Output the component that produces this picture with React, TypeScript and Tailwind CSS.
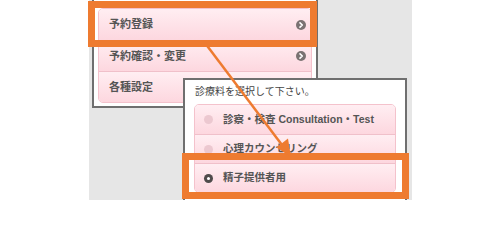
const font = { fontFamily: '"Liberation Sans", "Noto Sans CJK JP", sans-serif' };

const Chevron = () => (
  <svg width="10" height="10" viewBox="0 0 10 10">
    <circle cx="5" cy="5" r="5" fill="#7a7272" />
    <path d="M4 2.8 L6.3 5 L4 7.2" fill="none" stroke="#fff" strokeWidth="1.6" strokeLinecap="round" strokeLinejoin="round" />
  </svg>
);

const Radio = ({ on }: { on?: boolean }) =>
  on ? (
    <span className="w-[9px] h-[9px] rounded-full bg-[#4f4b4b] flex items-center justify-center">
      <span className="w-[3px] h-[3px] rounded-full bg-white" />
    </span>
  ) : (
    <span className="w-[9px] h-[9px] rounded-full bg-[#ecc8d0]" />
  );

const menu = [
  { label: "予約登録", arrow: true },
  { label: "予約確認・変更", arrow: true },
  { label: "各種設定", arrow: false },
];

const options = [
  { label: "診察・検査 Consultation・Test", on: false },
  { label: "心理カウンセリング", on: false },
  { label: "精子提供者用", on: true },
];

const App = () => {
  return (
    <div className="w-[500px] h-[200px] bg-white overflow-hidden relative" style={font}>
      <div className="ml-[89px] w-[323px] h-[200px] bg-[#e6e6e6] relative flex flex-col">
        {/* menu panel */}
        <div className="ml-[3px] mt-[-4px] w-[226px] h-[112px] shrink-0 border-2 border-[#6f6f6f] bg-white pt-[10px] pl-[4px] pr-[4px]">
          <div className="rounded-[5px] border border-[#f4c2cc] overflow-hidden">
            {menu.map((m, i) => (
              <div
                key={i}
                className={`h-[31px] flex items-center justify-between pl-[10px] pr-[5px] bg-gradient-to-b from-[#ffeef2] to-[#fdd7df] ${i > 0 ? "border-t border-[#f0c0ca]" : ""}`}
              >
                <span className="text-[11px] font-bold text-[#555]">{m.label}</span>
                {m.arrow && <Chevron />}
              </div>
            ))}
          </div>
        </div>

        {/* dialog panel */}
        <div className="absolute left-[94px] top-[78px] w-[224px] h-[130px] border-2 border-[#6f6f6f] bg-white pt-[5px] px-[9px]">
          <div className="text-[10px] text-[#444] leading-[14px] pl-[1px]">診療料を選択して下さい。</div>
          <div className="mt-[5px] rounded-[5px] border border-[#f4c2cc] overflow-hidden">
            {options.map((o, i) => (
              <div
                key={i}
                className={`h-[29px] flex items-center gap-[10px] pl-[9px] bg-gradient-to-b from-[#ffeef2] to-[#fdd7df] ${i > 0 ? "border-t border-[#f0c0ca]" : ""}`}
              >
                <Radio on={o.on} />
                <span className="text-[10.5px] font-bold text-[#555]">{o.label}</span>
              </div>
            ))}
          </div>
        </div>

        {/* highlight boxes */}
        <div className="absolute left-[-1px] top-[1px] w-[229px] h-[46px] border-[7px] border-[#ee7b30]" />
        <div className="absolute left-[93px] top-[153px] w-[227px] h-[46px] border-[7px] border-[#ee7b30]" />
      </div>

      {/* arrow */}
      <svg className="absolute left-0 top-0 pointer-events-none" width="500" height="200" viewBox="0 0 500 200">
        <line x1="205" y1="43" x2="282" y2="145" stroke="#ee7b30" strokeWidth="2.5" />
        <path d="M291 157 L276.5 147.5 L288 138.5 Z" fill="#ee7b30" />
      </svg>
    </div>
  );
};

export default App;
